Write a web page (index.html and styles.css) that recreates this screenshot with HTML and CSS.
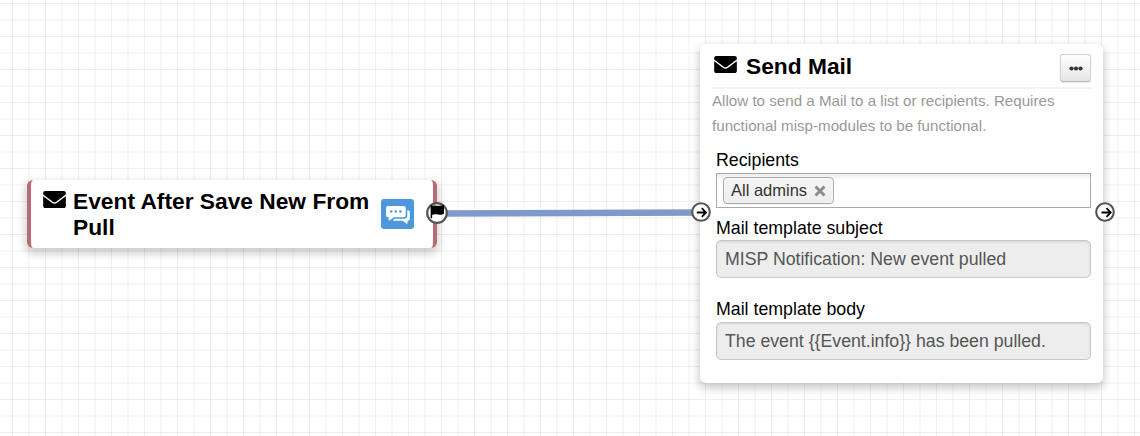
FILE: index.html
```
<!DOCTYPE html>
<html lang="en">
<head>
<meta charset="utf-8">
<title>Workflow editor</title>
<link rel="stylesheet" href="styles.css">
</head>
<body>
<main class="canvas">
  <svg class="connection" width="264" height="10" viewBox="0 0 264 10"><path d="M0 5.6L264 4.4" stroke="#7f9ac8" stroke-width="6.5"/></svg>

  <section class="node trigger">
    <svg class="icon-mail" viewBox="0 0 512 384"><path d="M502 127c4-3 10 0 10 5v204c0 27-21 48-48 48H48c-27 0-48-21-48-48V132c0-5 6-8 10-5 22 17 52 39 154 114 21 15 57 48 92 47 35 1 72-32 92-47 102-75 132-97 154-114zM256 256c23 0 57-29 74-42 133-96 143-105 173-128 6-5 9-12 9-19V48c0-27-21-48-48-48H48C21 0 0 21 0 48v19c0 7 3 14 9 19 30 23 40 32 173 128 17 13 51 42 74 42z"/></svg>
    <h2 class="title">Event After Save New From Pull</h2>
    <span class="chat-badge">
      <svg viewBox="0 0 24 18"><path fill="#fff" d="M2.2 0h15.600Q19.800 0 19.800 2.200v6.800Q19.800 11.200 17.600 11.200H8L3.800 14.300Q2.600 15 2.600 13.700V11.200H2.200Q0 11.200 0 9V2.200Q0 0 2.200 0zM21.300 4.200h.7q1.800 0 1.800 1.800v6.800q0 2-2 2h-.3v2.300q0 1.200-1.100.5L16.500 14.800H9q-1.400 0-2-.9l2-1.200H18q3.300 0 3.300-3.300z"/><g fill="#4b98dd"><circle cx="5.200" cy="5.600" r="1.250"/><circle cx="9.800" cy="5.600" r="1.250"/><circle cx="14.400" cy="5.600" r="1.250"/></g></svg>
    </span>
  </section>

  <section class="node mail">
    <header class="mail-head">
      <svg class="icon-mail" viewBox="0 0 512 384"><path d="M502 127c4-3 10 0 10 5v204c0 27-21 48-48 48H48c-27 0-48-21-48-48V132c0-5 6-8 10-5 22 17 52 39 154 114 21 15 57 48 92 47 35 1 72-32 92-47 102-75 132-97 154-114zM256 256c23 0 57-29 74-42 133-96 143-105 173-128 6-5 9-12 9-19V48c0-27-21-48-48-48H48C21 0 0 21 0 48v19c0 7 3 14 9 19 30 23 40 32 173 128 17 13 51 42 74 42z"/></svg>
      <h2 class="title">Send Mail</h2>
      <button class="more" aria-label="More"><svg width="14" height="5" viewBox="0 0 14 5" fill="#333"><circle cx="2.500" cy="2.500" r="2.100"/><circle cx="7" cy="2.500" r="2.100"/><circle cx="11.500" cy="2.500" r="2.100"/></svg></button>
    </header>
    <p class="description">Allow to send a Mail to a list or recipients. Requires functional misp-modules to be functional.</p>
    <div class="fields">
      <div class="label">Recipients</div>
      <div class="picker"><span class="chip">All admins<svg width="12" height="12" viewBox="0 0 12 12"><path d="M1.500 1.500l9 9M10.500 1.500l-9 9" stroke="#8c8c8c" stroke-width="3"/></svg></span></div>
      <div class="label subject-label">Mail template subject</div>
      <div class="input">MISP Notification: New event pulled</div>
      <div class="label body-label">Mail template body</div>
      <div class="input">The event {{Event.info}} has been pulled.</div>
    </div>
  </section>

  <svg class="port port-flag" viewBox="0 0 22 22"><circle cx="11" cy="11" r="9.800" fill="#fff" stroke="#555" stroke-width="2.200"/><path d="M5.400 3.200V16.200" stroke="#000" stroke-width="1.500"/><path d="M5.500 4.200C9 2.200 12 5 18 3V11.800C13.500 14.600 11 10.600 5.500 13z"/></svg>
  <svg class="port port-in" viewBox="0 0 20 20"><circle cx="10" cy="10" r="8.800" fill="#fff" stroke="#555" stroke-width="2.100"/><path d="M5.800 10.500H15M10.800 6.200l4.200 4.300-4.200 4.300" fill="none" stroke="#000" stroke-width="1.800"/></svg>
  <svg class="port port-out" viewBox="0 0 20 20"><circle cx="10" cy="10" r="8.800" fill="#fff" stroke="#555" stroke-width="2.100"/><path d="M6.500 10.500H15.700M11.500 6.200l4.200 4.300-4.200 4.300" fill="none" stroke="#000" stroke-width="1.800"/></svg>
</main>
</body>
</html>
```
FILE: styles.css
```
* { box-sizing: border-box; }
body { margin: 0; font-family: "Liberation Sans", Arial, sans-serif; color: #000; }
.canvas {
  position: relative;
  width: 1140px;
  height: 436px;
  overflow: hidden;
  background-color: #fff;
  background-image:
    linear-gradient(90deg, #0000 12px, #00000010 12px 13px, #0000 13px 28px, #00000007 28px 30px, #0000 30px),
    linear-gradient(#0000 3px, #00000010 3px 4px, #0000 4px 19px, #00000007 19px 21px, #0000 21px);
  background-size: 33px 33px;
}
.connection { position: absolute; left: 440px; top: 208px; }
.node {
  position: absolute;
  background: #fff;
  border-radius: 6px;
  box-shadow: 0 4px 10px 1px rgba(0, 0, 0, .22);
}
.icon-mail { flex: none; width: 23px; height: 17px; }
.title { margin: 0; font-size: 22.75px; line-height: 26px; font-weight: 700; }

/* Trigger node */
.trigger {
  left: 27px;
  top: 180px;
  width: 410px;
  height: 68px;
  display: flex;
  align-items: flex-start;
  padding: 8px 18px 0 12px;
  border: solid #b76b76;
  border-width: 0 4px;
}
.trigger .icon-mail { margin-top: 3px; }
.trigger .title { width: 301px; margin-left: 7px; }
.chat-badge {
  flex: none;
  width: 33px;
  height: 30px;
  margin: 11px 0 0 7px;
  display: grid;
  place-items: center;
  border-radius: 3px;
  background: #4b98dd;
}
.chat-badge svg { width: 24px; height: 18px; margin-top: 1px; }

/* Mail node */
.mail { left: 700px; top: 44px; width: 403px; height: 339px; padding: 0 12px; }
.mail-head {
  display: flex;
  height: 45px;
  padding: 9px 0 0 2px;
  border-bottom: 2px solid #f3f3f3;
}
.mail-head .icon-mail { margin-top: 3px; }
.mail-head .title { margin-left: 9px; }
.more {
  width: 31px;
  height: 28px;
  margin: 1px 0 0 auto;
  padding: 0;
  display: grid;
  place-items: center;
  border: 1px solid #d2d2d2;
  border-bottom-color: #b5b5b5;
  border-radius: 3px;
  background: linear-gradient(#fff, #e6e6e6);
  box-shadow: 0 1px 2px rgba(0, 0, 0, .08);
}
.description { margin: -1px 0 0; font-size: 15.15px; line-height: 25px; color: #999; }
.fields { padding: 9px 0 0 4px; }
.label { height: 26px; font-size: 17.75px; line-height: 26px; }
.picker {
  width: 375px;
  height: 35px;
  margin: 0 0 7px;
  padding: 3px 6px;
  border: 1px solid #aaa;
  background: linear-gradient(#eee 1px, #fff 6px);
}
.chip {
  display: inline-flex;
  align-items: center;
  gap: 7px;
  height: 27px;
  padding: 0 7px;
  border: 1px solid #aaa;
  border-radius: 4px;
  background: linear-gradient(#f4f4f4 20%, #eee);
  box-shadow: inset 0 0 2px #fff, 0 1px 0 rgba(0, 0, 0, .05);
  font-size: 16.5px;
  line-height: 25px;
  color: #333;
}
.input {
  width: 375px;
  height: 38px;
  padding-left: 8px;
  border: 1px solid #c8c8c8;
  border-radius: 5px;
  background: #ededed;
  box-shadow: inset 0 1px 2px rgba(0, 0, 0, .1);
  font-size: 17.72px;
  line-height: 36px;
  color: #555;
}
.subject-label { height: 25px; }
.body-label { margin-top: 18px; }

/* Connection ports straddle the node edges */
.port { position: absolute; width: 20px; height: 20px; }
.port-flag { left: 425.500px; top: 202px; width: 22px; height: 22px; }
.port-in { left: 691px; top: 202px; }
.port-out { left: 1094.500px; top: 202px; }
```
